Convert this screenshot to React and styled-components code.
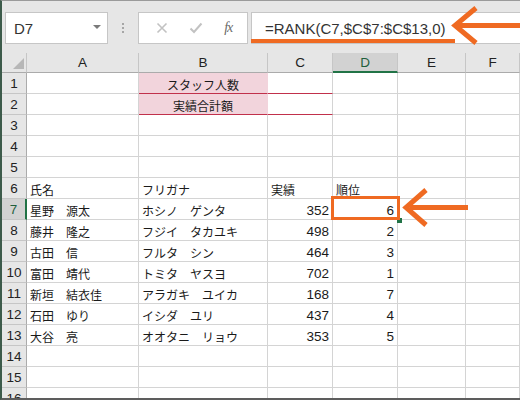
import React from "react";
import styled, { createGlobalStyle } from "styled-components";

const GlobalStyle = createGlobalStyle`
  html, body { margin: 0; padding: 0; background: #ffffff; }
  * { box-sizing: border-box; }
`;

const ORANGE = "#ef6a22";
const GREEN = "#217346";

const Frame = styled.div`
  position: relative;
  width: 520px;
  height: 400px;
  overflow: hidden;
  background: #e6e6e6;
  border-top: 1px solid #9a9a9a;
  border-left: 2px solid #3d5b4b;
  border-bottom: 2px solid #5d5d5d;
  font-family: "Liberation Sans", Arial, sans-serif;
`;

const Toolbar = styled.div`
  height: 52px;
  display: flex;
  align-items: flex-start;
  padding: 11px 0 0 3px;
`;

const Box = styled.div`
  height: 32px;
  background: #ffffff;
  border: 1px solid #c6c6c6;
  display: flex;
  align-items: center;
`;

const NameBox = styled(Box)`
  width: 103px;
  padding: 0 6px 0 8px;
  justify-content: space-between;
  font-size: 15px;
  color: #333;
`;

const Caret = styled.span`
  width: 0;
  height: 0;
  border-left: 4px solid transparent;
  border-right: 4px solid transparent;
  border-top: 4px solid #7a7a7a;
  margin-top: -2px;
`;

const Grip = styled.div`
  width: 30px;
  height: 32px;
  display: flex;
  flex-direction: column;
  align-items: center;
  justify-content: center;
  gap: 2px;
  & > i {
    width: 2px;
    height: 2px;
    background: #a6a6a6;
  }
`;

const FxBox = styled(Box)`
  width: 110px;
  justify-content: space-around;
  padding: 0 4px 0 6px;
`;

const FxIcon = styled.span`
  font-family: "Liberation Serif", "Times New Roman", serif;
  font-style: italic;
  font-size: 14px;
  color: #6a6a6a;
  letter-spacing: -1px;
`;

const FormulaBox = styled(Box)`
  flex: 1;
  margin-left: 3px;
  padding-left: 13px;
  font-size: 15px;
  color: #333;
  border-right: none;
`;

const Sheet = styled.div`
  display: grid;
  grid-template-columns: 25px 112px 129px 65px 65px 68px 1fr;
  grid-auto-rows: 21px;
  grid-template-rows: 20px;
  background: #ffffff;
`;

const Corner = styled.div`
  background: #e6e6e6;
  border-right: 1px solid #c6c6c6;
  border-bottom: 1px solid #ababab;
  position: relative;
  &::after {
    content: "";
    position: absolute;
    right: 2px;
    bottom: 3px;
    width: 0;
    height: 0;
    border-left: 11px solid transparent;
    border-bottom: 11px solid #b7b7b7;
  }
`;

const ColHead = styled.div`
  background: ${(p) => (p.$sel ? "#d2d2d2" : "#e6e6e6")};
  border-right: 1px solid #c6c6c6;
  border-bottom: ${(p) => (p.$sel ? `2px solid ${GREEN}` : "1px solid #ababab")};
  display: flex;
  align-items: center;
  justify-content: center;
  font-size: 13.5px;
  color: ${(p) => (p.$sel ? "#1f5f3c" : "#222")};
  padding-top: ${(p) => (p.$sel ? "1px" : "0")};
`;

const RowHead = styled.div`
  background: ${(p) => (p.$sel ? "#d2d2d2" : "#e6e6e6")};
  border-right: ${(p) => (p.$sel ? `2px solid ${GREEN}` : "1px solid #ababab")};
  border-bottom: 1px solid #c6c6c6;
  display: flex;
  align-items: center;
  justify-content: center;
  font-size: 13.5px;
  color: ${(p) => (p.$sel ? "#1f5f3c" : "#222")};
  padding-top: 1px;
`;

const Cell = styled.div`
  background: ${(p) => p.$bg || "#ffffff"};
  border-right: 1px solid ${(p) => p.$bg ? p.$bg : "#d4d4d4"};
  border-bottom: 1px solid ${(p) => (p.$line ? "#c1304b" : "#d4d4d4")};
  display: flex;
  align-items: center;
  padding: 2px 3px 0 3px;
  white-space: nowrap;
  overflow: hidden;
  justify-content: ${(p) =>
    p.$align === "right" ? "flex-end" : p.$align === "center" ? "center" : "flex-start"};
  font-family: ${(p) =>
    p.$num
      ? '"Liberation Sans", Arial, sans-serif'
      : '"Noto Sans CJK JP", "Liberation Sans", sans-serif'};
  font-size: ${(p) => (p.$num ? "13.5px" : "12px")};
  color: #1a1a1a;
`;

const Overlay = styled.svg`
  position: absolute;
  left: -2px;
  top: -1px;
  width: 520px;
  height: 400px;
  pointer-events: none;
`;

const cols = ["A", "B", "C", "D", "E", "F"];

const data = [
  ["星野　源太", "ホシノ　ゲンタ", "352", "6"],
  ["藤井　隆之", "フジイ　タカユキ", "498", "2"],
  ["古田　信", "フルタ　シン", "464", "3"],
  ["富田　靖代", "トミタ　ヤスヨ", "702", "1"],
  ["新垣　結衣佳", "アラガキ　ユイカ", "168", "7"],
  ["石田　ゆり", "イシダ　ユリ", "437", "4"],
  ["大谷　亮", "オオタニ　リョウ", "353", "5"],
];

function buildRows() {
  const rows = [];
  for (let r = 1; r <= 16; r++) {
    let cells;
    if (r === 1 || r === 2) {
      cells = [
        <Cell key="a" />,
        <Cell key="b" $bg="#f2d4dc" $line $align="center">
          {r === 1 ? "スタッフ人数" : "実績合計額"}
        </Cell>,
        <Cell key="c" $line />,
        <Cell key="d" />,
        <Cell key="e" />,
        <Cell key="f" />,
      ];
    } else if (r === 6) {
      cells = [
        <Cell key="a">氏名</Cell>,
        <Cell key="b">フリガナ</Cell>,
        <Cell key="c">実績</Cell>,
        <Cell key="d">順位</Cell>,
        <Cell key="e" />,
        <Cell key="f" />,
      ];
    } else if (r >= 7 && r <= 13) {
      const d = data[r - 7];
      cells = [
        <Cell key="a">{d[0]}</Cell>,
        <Cell key="b">{d[1]}</Cell>,
        <Cell key="c" $num $align="right">{d[2]}</Cell>,
        <Cell key="d" $num $align="right">{d[3]}</Cell>,
        <Cell key="e" />,
        <Cell key="f" />,
      ];
    } else {
      cells = cols.map((c) => <Cell key={c} />);
    }
    rows.push(
      <React.Fragment key={r}>
        <RowHead $sel={r === 7}>{r}</RowHead>
        {cells}
      </React.Fragment>
    );
  }
  return rows;
}

export default function App() {
  return (
    <>
      <GlobalStyle />
      <Frame>
        <Toolbar>
          <NameBox>
            <span>D7</span>
            <Caret />
          </NameBox>
          <Grip>
            <i />
            <i />
            <i />
          </Grip>
          <FxBox>
            <svg width="12" height="12" viewBox="0 0 12 12">
              <path d="M1.5 1.5 L10.5 10.5 M10.5 1.5 L1.5 10.5" stroke="#c2c2c2" strokeWidth="1.6" fill="none" />
            </svg>
            <svg width="14" height="12" viewBox="0 0 14 12">
              <path d="M1.5 6.5 L5 10 L12.5 1.5" stroke="#c2c2c2" strokeWidth="2" fill="none" />
            </svg>
            <FxIcon>fx</FxIcon>
          </FxBox>
          <FormulaBox>=RANK(C7,$C$7:$C$13,0)</FormulaBox>
        </Toolbar>
        <Sheet>
          <Corner />
          {cols.map((c) => (
            <ColHead key={c} $sel={c === "D"}>
              {c}
            </ColHead>
          ))}
          {buildRows()}
        </Sheet>
        <Overlay viewBox="0 0 520 400">
          <rect x="251" y="39" width="204" height="4" fill={ORANGE} />
          <line x1="458" y1="25.5" x2="520" y2="25.5" stroke={ORANGE} strokeWidth="5" />
          <polyline points="476,8 455,25.5 476,43" stroke={ORANGE} strokeWidth="5" fill="none" strokeLinejoin="miter" />
          <rect x="397" y="218" width="5" height="5" fill={GREEN} />
          <rect x="332.5" y="197.5" width="66" height="21" stroke={ORANGE} strokeWidth="3" fill="none" />
          <line x1="410" y1="207.5" x2="468" y2="207.5" stroke={ORANGE} strokeWidth="5" />
          <polyline points="426,190 406,207.5 426,225" stroke={ORANGE} strokeWidth="5" fill="none" strokeLinejoin="miter" />
        </Overlay>
      </Frame>
    </>
  );
}
